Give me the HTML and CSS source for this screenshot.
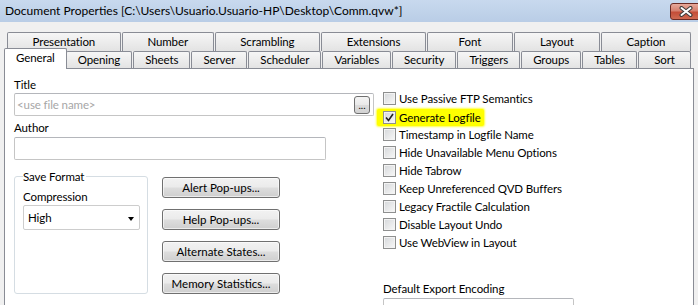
FILE: index.html
```html
<!DOCTYPE html>
<html lang="en">
<head>
  <meta charset="UTF-8">
  <title>Document Properties</title>
  <link rel="stylesheet" href="styles.css">
</head>
<body>
  <!-- Title bar -->
  <div class="titlebar">
    <span class="title">Document Properties [C:\Users\Usuario.Usuario-HP\Desktop\Comm.qvw*]</span>
    <button class="close-btn" type="button">
      <svg width="14" height="11" viewBox="0 0 14 11">
        <path d="M2.5 2 L11.5 9 M11.5 2 L2.5 9" stroke="#3b3b3b" stroke-width="4" stroke-linecap="round"/>
        <path d="M2.5 2 L11.5 9 M11.5 2 L2.5 9" stroke="#fff" stroke-width="2" stroke-linecap="round"/>
      </svg>
    </button>
  </div>

  <!-- Tabs -->
  <div class="tabs">
    <div class="tab-row row-top">
      <div class="tab">Presentation</div>
      <div class="tab">Number</div>
      <div class="tab">Scrambling</div>
      <div class="tab">Extensions</div>
      <div class="tab">Font</div>
      <div class="tab">Layout</div>
      <div class="tab">Caption</div>
    </div>
    <div class="tab-row row-bottom">
      <div class="tab active">General</div>
      <div class="tab">Opening</div>
      <div class="tab">Sheets</div>
      <div class="tab">Server</div>
      <div class="tab">Scheduler</div>
      <div class="tab">Variables</div>
      <div class="tab">Security</div>
      <div class="tab">Triggers</div>
      <div class="tab">Groups</div>
      <div class="tab">Tables</div>
      <div class="tab">Sort</div>
    </div>
  </div>

  <!-- General page -->
  <div class="panel">
    <div class="col-left">
      <div class="field-label">Title</div>
      <div class="text-box title-box">
        <span class="placeholder">&lt;use file name&gt;</span>
        <button class="ellipsis-btn" type="button">...</button>
      </div>

      <div class="field-label author-label">Author</div>
      <div class="text-box author-box"></div>

      <div class="lower">
        <fieldset class="save-format">
          <legend>Save Format</legend>
          <div class="field-label compression-label">Compression</div>
          <div class="select">
            <span>High</span>
            <span class="arrow"></span>
          </div>
        </fieldset>

        <div class="buttons">
          <button class="btn" type="button">Alert Pop-ups...</button>
          <button class="btn" type="button">Help Pop-ups...</button>
          <button class="btn" type="button">Alternate States...</button>
          <button class="btn" type="button">Memory Statistics...</button>
        </div>
      </div>
    </div>

    <div class="col-right">
      <div class="check-row"><span class="check-box"></span>Use Passive FTP Semantics</div>
      <div class="check-row">
        <span class="marker">
          <span class="check-box checked">
            <svg width="9" height="9" viewBox="0 0 9 9"><path d="M1 4.5 L3.5 7.5 L8 1" fill="none" stroke="#222" stroke-width="1.6"/></svg>
          </span>Generate Logfile
        </span>
      </div>
      <div class="check-row"><span class="check-box"></span>Timestamp in Logfile Name</div>
      <div class="check-row"><span class="check-box"></span>Hide Unavailable Menu Options</div>
      <div class="check-row"><span class="check-box"></span>Hide Tabrow</div>
      <div class="check-row"><span class="check-box"></span>Keep Unreferenced QVD Buffers</div>
      <div class="check-row"><span class="check-box"></span>Legacy Fractile Calculation</div>
      <div class="check-row"><span class="check-box"></span>Disable Layout Undo</div>
      <div class="check-row"><span class="check-box"></span>Use WebView in Layout</div>

      <div class="field-label encoding-label">Default Export Encoding</div>
      <div class="text-box encoding-box"></div>
    </div>
  </div>
</body>
</html>
```

FILE: styles.css
```css
:root {
  --dialog-bg: #f0f0f0;
  --tab-border: #898c95;
  --box-border: #c5c5c5;
  --btn-border: #707070;
  --ui-font: Lato, "Liberation Sans", Arial, sans-serif;
}

* {
  box-sizing: border-box;
}

html, body {
  margin: 0;
  height: 305px;
  overflow: hidden;
}

body {
  background: var(--dialog-bg);
  font-family: var(--ui-font);
  font-size: 11.5px;
  letter-spacing: -0.1px;
  color: #000;
}

/* Title bar */
.titlebar {
  height: 22px;
  display: flex;
  align-items: flex-start;
  padding-left: 5px;
  background: linear-gradient(#c8d9ee, #b9cde6);
}

.title {
  flex: 1;
  white-space: nowrap;
  font-size: 12px;
  letter-spacing: 0;
  line-height: 22px;
}

.close-btn {
  width: 31px;
  height: 17px;
  margin: 3px -3px 0 0;
  padding: 0;
  border: 1px solid #6b2b25;
  border-radius: 3px;
  background: linear-gradient(#e7a99b, #d6806f 45%, #c44d38 55%, #cf6a52);
  display: flex;
  align-items: center;
  justify-content: center;
}

/* Tabs */
.tabs {
  padding-top: 10px;
  position: relative;
  z-index: 1;
}

.tab-row {
  display: flex;
  gap: 1px;
}

.row-top {
  margin: 0 7px;
  height: 19px;
}

.row-bottom {
  margin: 0 7px 0 6px;
  height: 17px;
  align-items: flex-end;
}

.tab {
  flex: 1 1 auto;
  min-width: 53px;
  padding: 0 4px;
  border: 1px solid var(--tab-border);
  border-bottom: none;
  border-radius: 2px 2px 0 0;
  background: linear-gradient(#f6f6f6, #e3e3e3);
  text-align: center;
  white-space: nowrap;
}

.row-top .tab {
  min-width: 86px;
  height: 19px;
  line-height: 18px;
}

.row-bottom .tab {
  height: 17px;
  line-height: 16px;
}

.row-bottom .tab.active {
  position: relative;
  z-index: 2;
  height: 21px;
  margin: 0 -2px -1px -2px;
  line-height: 18px;
  background: #fff;
}

/* Page */
.panel {
  margin: 0 4px;
  height: 260px;
  display: flex;
  padding: 8px 0 0 9px;
  border: 1px solid var(--tab-border);
  background: #fff;
}

.col-left {
  width: 360px;
}

.col-right {
  margin-left: 9px;
  padding-top: 13px;
}

.field-label {
  line-height: 15px;
}

.text-box {
  height: 23px;
  display: flex;
  align-items: center;
  padding: 0 3px 0 2px;
  border: 1px solid var(--box-border);
  border-top-color: #b4b6bb;
  border-radius: 2px;
  background: #fff;
}

.title-box {
  margin-top: 1px;
  justify-content: space-between;
}

.placeholder {
  color: #a6a6a6;
}

.ellipsis-btn {
  width: 16px;
  height: 18px;
  padding: 0 0 3px;
  border: 1px solid var(--btn-border);
  border-radius: 3px;
  background: linear-gradient(#f4f4f4, #e9e9e9 50%, #dcdcdc 50%, #d2d2d2);
  font: 10px var(--ui-font);
  line-height: 10px;
  display: flex;
  align-items: flex-end;
  justify-content: center;
}

.author-label {
  margin-top: 4px;
}

.author-box {
  width: 312px;
  margin-top: 2px;
}

.lower {
  display: flex;
  margin-top: 9px;
}

.save-format {
  width: 134px;
  margin: 0;
  padding: 0 7px 8px 8px;
  border: 1px solid #d5dde3;
  border-radius: 3px;
  min-inline-size: 0;
}

.save-format legend {
  padding: 0 2px 0 0;
  line-height: 15px;
}

.compression-label {
  margin-top: 5px;
}

.select {
  width: 117px;
  height: 25px;
  margin-top: 1px;
  display: flex;
  align-items: center;
  justify-content: space-between;
  padding: 0 5px 0 4px;
  border: 1px solid #cdcdcd;
  border-radius: 2px;
}

.arrow {
  width: 0;
  height: 0;
  border-left: 3.5px solid transparent;
  border-right: 3.5px solid transparent;
  border-top: 4px solid #000;
  margin-top: 2px;
}

.buttons {
  display: flex;
  flex-direction: column;
  gap: 11px;
  margin: 8px 0 0 14px;
}

.btn {
  width: 118px;
  height: 21px;
  padding: 0;
  border: 1px solid var(--btn-border);
  border-radius: 3px;
  background: linear-gradient(#f2f2f2, #ebebeb 48%, #dddddd 52%, #cfcfcf);
  font: inherit;
  color: #000;
  box-shadow: inset 0 0 0 1px rgba(255, 255, 255, 0.6);
}

/* Checkboxes */
.check-row {
  height: 17.9px;
  display: flex;
  align-items: center;
  white-space: nowrap;
}

.check-box {
  width: 13px;
  height: 13px;
  margin-right: 3px;
  border: 1px solid #8e8f8f;
  background: linear-gradient(135deg, #d5d7da, #f8f8f8);
  box-shadow: inset 0 0 0 1px #f3f3f3;
  display: flex;
  align-items: center;
  justify-content: center;
  flex: none;
}

.marker {
  display: inline-flex;
  align-items: center;
  height: 17px;
  margin: 1px 0 0 -6px;
  padding: 0 3px 0 6px;
  background: #ffff00;
  box-shadow: 0 0 2px 1px #ffff40;
  border-radius: 2px;
}

.encoding-label {
  margin-top: 30px;
}

.encoding-box {
  width: 191px;
  height: 22px;
  margin-top: 2px;
}
```
